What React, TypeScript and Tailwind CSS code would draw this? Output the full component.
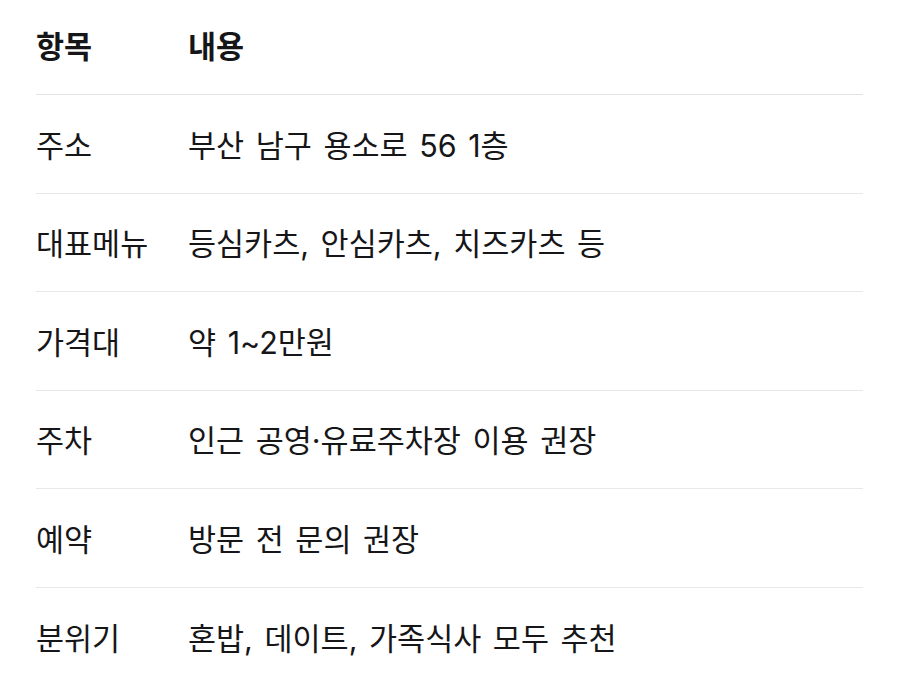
export default function App() {
  const rows = [
    { k: "주소", v: "부산 남구 용소로 56 1층" },
    { k: "대표메뉴", v: "등심카츠, 안심카츠, 치즈카츠 등" },
    { k: "가격대", v: "약 1~2만원" },
    { k: "주차", v: "인근 공영·유료주차장 이용 권장" },
    { k: "예약", v: "방문 전 문의 권장" },
    { k: "분위기", v: "혼밥, 데이트, 가족식사 모두 추천" },
  ];

  return (
    <div className="w-[900px] h-[692px] bg-white overflow-hidden font-['Inter','Noto_Sans_CJK_KR',sans-serif] text-[#161618]">
      <div className="mx-[36px] w-[827px]">
        <div className="flex items-center h-[95px] border-b border-[#e2e2e2] text-[30.5px] font-semibold">
          <div className="w-[152px] shrink-0">항목</div>
          <div>내용</div>
        </div>
        {rows.map((r) => (
          <div
            key={r.k}
            className="flex items-center h-[98.5px] pt-[4px] border-b border-[#e8e8e8] last:border-b-0 text-[30.5px] [word-spacing:3px]"
          >
            <div className="w-[152px] shrink-0">{r.k}</div>
            <div>{r.v}</div>
          </div>
        ))}
      </div>
    </div>
  );
}
